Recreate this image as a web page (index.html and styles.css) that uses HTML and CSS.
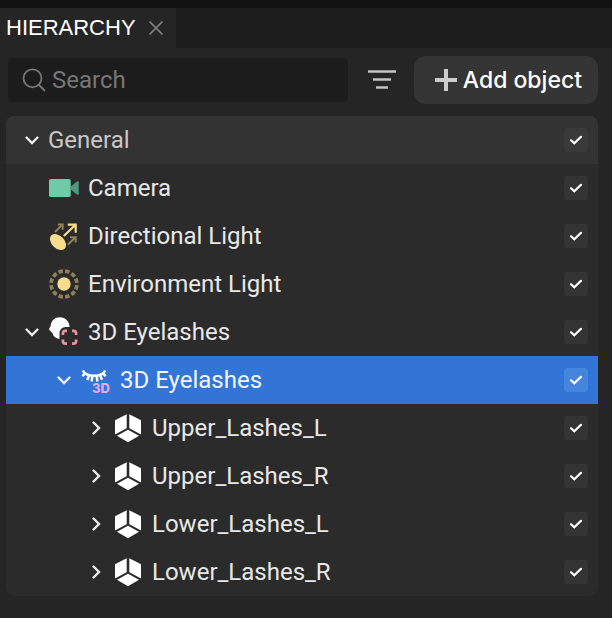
FILE: index.html
```html
<!DOCTYPE html>
<html lang="en">
<head>
<meta charset="utf-8">
<title>Hierarchy</title>
<link rel="stylesheet" href="styles.css">
</head>
<body>
<svg class="defs" aria-hidden="true">
  <symbol id="down" viewBox="0 0 32 32"><path d="M10.500 13.500l5.500 5.500 5.500-5.500" fill="none" stroke="currentColor" stroke-width="2.400" stroke-linecap="round"/></symbol>
  <symbol id="right" viewBox="0 0 32 32"><path d="M13.500 10.500l5.500 5.500-5.500 5.500" fill="none" stroke="currentColor" stroke-width="2.400" stroke-linecap="round"/></symbol>
  <symbol id="tick" viewBox="0 0 24 24"><path d="M7 12.300l3.300 3 6.700-6.500" fill="none" stroke="#fff" stroke-width="2.200" stroke-linecap="round" stroke-linejoin="miter"/></symbol>
  <symbol id="mesh" viewBox="0 0 32 32"><path d="M3 8.300L14.700 2.300v14L3 22.600zM29 8.300L17.300 2.300v14L29 22.600zM16 17.800l11 6-11 6.500-11-6.500z" fill="#fff"/></symbol>
</svg>
<header class="tabs">
  <div class="tab">
    <h1>HIERARCHY</h1>
    <button class="close" aria-label="Close"><svg viewBox="0 0 16 16"><path d="M2 2l12 12M14 2L2 14" fill="none" stroke="#858585" stroke-width="1.700" stroke-linecap="round"/></svg></button>
  </div>
</header>
<main>
  <div class="toolbar">
    <label class="search">
      <svg viewBox="0 0 24 24"><g fill="none" stroke="#777" stroke-width="1.800" stroke-linecap="round"><circle cx="10.500" cy="10.300" r="9"/><path d="M17 17l5.500 5.500"/></g></svg>
      <input type="text" placeholder="Search" aria-label="Search">
    </label>
    <button class="filter" aria-label="Filter"><svg viewBox="0 0 28 20"><path d="M0 1.500h28M5 9.500h18M8 17.500h12" stroke="#c4c4c4" stroke-width="2.600"/></svg></button>
    <button class="add"><svg viewBox="0 0 22 22"><path d="M11 0v22M0 11h22" stroke="#ccc" stroke-width="4"/></svg>Add object</button>
  </div>
  <ul class="tree">
    <li class="row group">
      <button class="toggle" aria-label="Collapse General"><svg><use href="#down"/></svg></button>
      <span class="name">General</span>
      <label class="check"><input type="checkbox" checked aria-label="General"><svg><use href="#tick"/></svg></label>
    </li>
    <li class="row">
      <span class="toggle"></span>
      <svg class="icon" viewBox="0 0 32 32"><rect x="1" y="7" width="21.700" height="18" rx="1.800" fill="#6ecba9"/><path d="M22.700 14.500l6-4.800q2-1.300 2 .8v11q0 2-2 .8l-6-4.800z" fill="#549781"/></svg>
      <span class="name">Camera</span>
      <label class="check"><input type="checkbox" checked aria-label="Camera"><svg><use href="#tick"/></svg></label>
    </li>
    <li class="row">
      <span class="toggle"></span>
      <svg class="icon" viewBox="0 0 32 32"><ellipse cx="10" cy="22" rx="9.400" ry="6.300" transform="rotate(45 10 22)" fill="#f9dd8d"/><g fill="none" stroke="#8f8159" stroke-width="2"><path d="M7 12l7.500-7.500M9.800 4.500h4.900v5.300M19.800 24.800l7.700-7.500M22 17.300h5.700v5.200"/></g><path d="M15.800 16L27.500 4.700M19.800 4.700h7.900v8" fill="none" stroke="#f9dd8d" stroke-width="2.200"/></svg>
      <span class="name">Directional Light</span>
      <label class="check"><input type="checkbox" checked aria-label="Directional Light"><svg><use href="#tick"/></svg></label>
    </li>
    <li class="row">
      <span class="toggle"></span>
      <svg class="icon" viewBox="0 0 32 32"><circle cx="16" cy="16" r="6.700" fill="#f9dd8d"/><circle cx="16" cy="16" r="12.900" fill="none" stroke="#8f8159" stroke-width="3.700" pathLength="120" stroke-dasharray="6.600 3.400" stroke-dashoffset="-1.700"/></svg>
      <span class="name">Environment Light</span>
      <label class="check"><input type="checkbox" checked aria-label="Environment Light"><svg><use href="#tick"/></svg></label>
    </li>
    <li class="row">
      <button class="toggle" aria-label="Collapse 3D Eyelashes"><svg><use href="#down"/></svg></button>
      <svg class="icon" viewBox="0 0 32 32"><path d="M12 1.200c5.200 0 9.200 3.800 9.700 9.800h-4.200a6 6 0 0 0-6 6v5.900q-6-1-6.800-5.400L1.200 13.700q-.3-.8.300-1.600l1.200-2.200C3 4.600 7 1.200 12 1.200z" fill="#fff"/><path d="M14.900 19v-1.500a2.600 2.600 0 0 1 2.600-2.600H19M24 14.900h1.500a2.600 2.600 0 0 1 2.600 2.600V19M28.100 23.500V25a2.600 2.600 0 0 1-2.600 2.600H24M19 27.600h-1.500a2.600 2.600 0 0 1-2.600-2.600v-1.500" fill="none" stroke="#e9949c" stroke-width="2.700"/></svg>
      <span class="name">3D Eyelashes</span>
      <label class="check"><input type="checkbox" checked aria-label="3D Eyelashes"><svg><use href="#tick"/></svg></label>
    </li>
    <li class="row level-1 selected">
      <button class="toggle" aria-label="Collapse 3D Eyelashes mesh"><svg><use href="#down"/></svg></button>
      <svg class="icon" viewBox="0 0 32 32"><g fill="none" stroke="#fff" stroke-width="2.500"><path d="M2.800 6.500Q5 11.600 14 11.800 23 11.600 25.200 6.500"/><path d="M5.500 9l-3.200 3.200M9.300 11l-2 5M12.300 11.500l-.6 6M16.700 11.500l.6 6M20 11l2 4.800M22.500 9l3.200 3.200"/></g><text class="badge" x="12" y="29">3D</text></svg>
      <span class="name">3D Eyelashes</span>
      <label class="check"><input type="checkbox" checked aria-label="3D Eyelashes mesh"><svg><use href="#tick"/></svg></label>
    </li>
    <li class="row level-2">
      <button class="toggle" aria-label="Expand Upper_Lashes_L"><svg><use href="#right"/></svg></button>
      <svg class="icon"><use href="#mesh"/></svg>
      <span class="name">Upper_Lashes_L</span>
      <label class="check"><input type="checkbox" checked aria-label="Upper_Lashes_L"><svg><use href="#tick"/></svg></label>
    </li>
    <li class="row level-2">
      <button class="toggle" aria-label="Expand Upper_Lashes_R"><svg><use href="#right"/></svg></button>
      <svg class="icon"><use href="#mesh"/></svg>
      <span class="name">Upper_Lashes_R</span>
      <label class="check"><input type="checkbox" checked aria-label="Upper_Lashes_R"><svg><use href="#tick"/></svg></label>
    </li>
    <li class="row level-2">
      <button class="toggle" aria-label="Expand Lower_Lashes_L"><svg><use href="#right"/></svg></button>
      <svg class="icon"><use href="#mesh"/></svg>
      <span class="name">Lower_Lashes_L</span>
      <label class="check"><input type="checkbox" checked aria-label="Lower_Lashes_L"><svg><use href="#tick"/></svg></label>
    </li>
    <li class="row level-2">
      <button class="toggle" aria-label="Expand Lower_Lashes_R"><svg><use href="#right"/></svg></button>
      <svg class="icon"><use href="#mesh"/></svg>
      <span class="name">Lower_Lashes_R</span>
      <label class="check"><input type="checkbox" checked aria-label="Lower_Lashes_R"><svg><use href="#tick"/></svg></label>
    </li>
  </ul>
</main>
</body>
</html>
```
FILE: styles.css
```css
* { box-sizing: border-box; }
body {
  margin: 0;
  min-height: 100vh;
  background: #252525;
  color: #e8e8e8;
  font: 24px/32px Roboto, "Liberation Sans", sans-serif;
}
button {
  padding: 0;
  border: 0;
  background: none;
  color: inherit;
  font: inherit;
}
svg { display: block; flex: none; }
.defs { display: none; }
.tabs {
  display: flex;
  border-top: 8px solid #121212;
  background: #1d1d1d;
}
.tab {
  display: flex;
  align-items: center;
  gap: 12px;
  height: 40px;
  padding: 0 12px 0 6px;
  background: #252525;
}
h1 {
  margin: 0;
  color: #fff;
  font: 22px/32px "Liberation Sans", sans-serif;
}
.close svg { width: 16px; height: 16px; }
.toolbar {
  display: flex;
  align-items: center;
  padding: 8px 14px 12px 8px;
}
.search {
  display: flex;
  flex: 1;
  align-items: center;
  gap: 6px;
  min-width: 0;
  height: 44px;
  padding: 0 14px;
  border-radius: 4px;
  background: #1c1c1c;
}
.search svg { width: 24px; height: 24px; }
.search input {
  flex: 1;
  min-width: 0;
  padding: 0;
  border: 0;
  outline: 0;
  background: none;
  color: #e8e8e8;
  font: inherit;
}
.search input::placeholder { color: #777; opacity: 1; }
.filter { margin: 0 18px 0 20px; }
.filter svg { width: 28px; height: 20px; }
.add {
  display: flex;
  align-items: center;
  gap: 6px;
  height: 48px;
  padding: 0 16px 0 21px;
  border-radius: 12px;
  background: #353535;
  color: #fff;
  font: 500 23px/32px Inter, "Liberation Sans", sans-serif;
}
.add svg { width: 22px; height: 22px; }
.tree {
  margin: 0 14px 0 6px;
  padding: 0;
  overflow: hidden;
  border-radius: 8px;
  background: #2b2b2b;
  list-style: none;
}
.row {
  display: flex;
  align-items: center;
  height: 48px;
  padding: 0 10px;
}
.group { background: #333; color: #c8c8c8; }
.level-1 { padding-left: 42px; }
.level-2 { padding-left: 74px; }
.selected { background: #3374d7; color: #f2f6fd; }
.toggle { width: 32px; height: 32px; color: #ececec; flex: none; }
.toggle svg, .icon { width: 32px; height: 32px; }
.icon { margin-right: 8px; }
.name { flex: 1; }
.badge { fill: #dfabef; font: 800 13px Inter, sans-serif; }
.check {
  display: grid;
  width: 24px;
  height: 24px;
  border-radius: 4px;
  background: #343434;
}
.group .check { background: #3a3a3a; }
.check > * { grid-area: 1 / 1; width: 24px; height: 24px; }
.check input { margin: 0; appearance: none; }
.check svg { visibility: hidden; pointer-events: none; }
.check input:checked + svg { visibility: visible; }
.selected .check { background: #4585dd; }
```
